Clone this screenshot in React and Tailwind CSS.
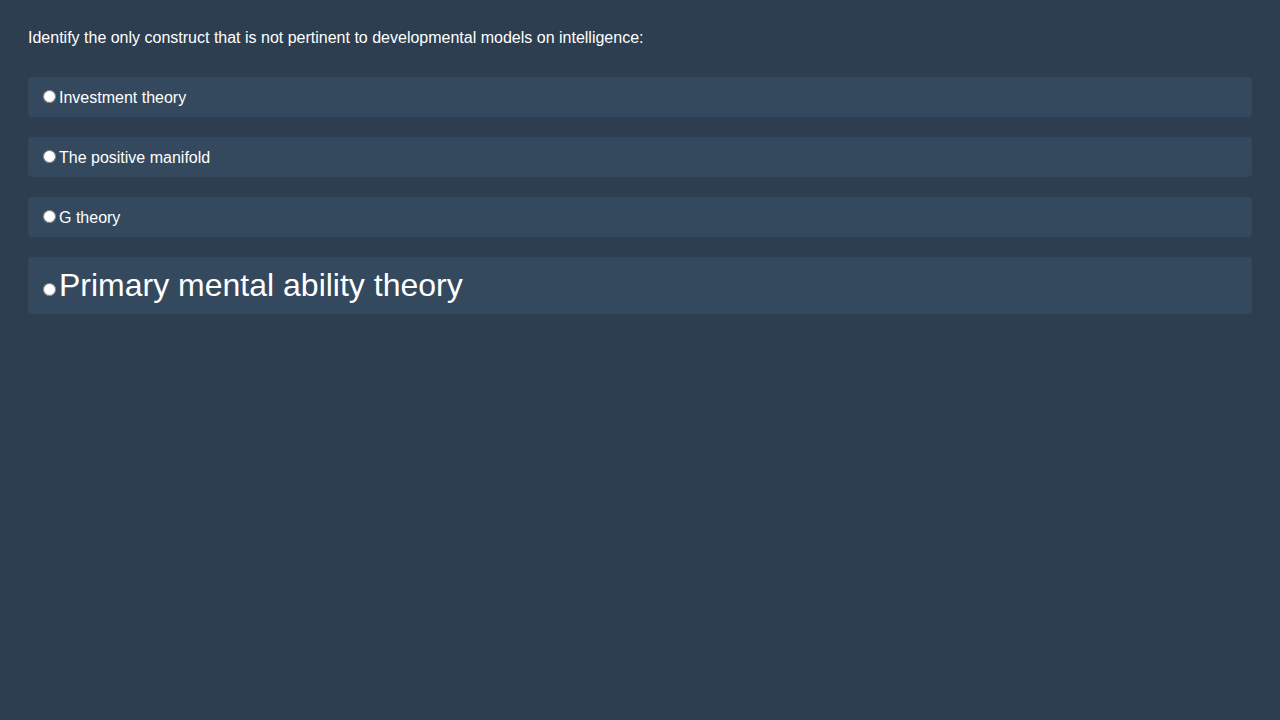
export default function App() {
  const options = [
    { label: "Investment theory", big: false },
    { label: "The positive manifold", big: false },
    { label: "G theory", big: false },
    { label: "Primary mental ability theory", big: true },
  ];

  return (
    <div className="min-h-screen bg-[#2c3e50] px-[28px] pt-[29px] text-white font-['Liberation_Sans',Arial,sans-serif]">
      <p className="text-base leading-[18px] mb-[30px]">
        Identify the only construct that is not pertinent to developmental models on intelligence:
      </p>
      <div className="flex flex-col gap-5">
        {options.map((opt) => (
          <label
            key={opt.label}
            className={
              opt.big
                ? "block bg-[#34495e] rounded p-[10px] text-[32px] leading-[normal]"
                : "block bg-[#34495e] rounded p-[10px] text-base leading-[normal]"
            }
          >
            <input type="radio" name="answer" className="ml-[5px] mr-[3px] mt-[3px]" />
            {opt.label}
          </label>
        ))}
      </div>
    </div>
  );
}
